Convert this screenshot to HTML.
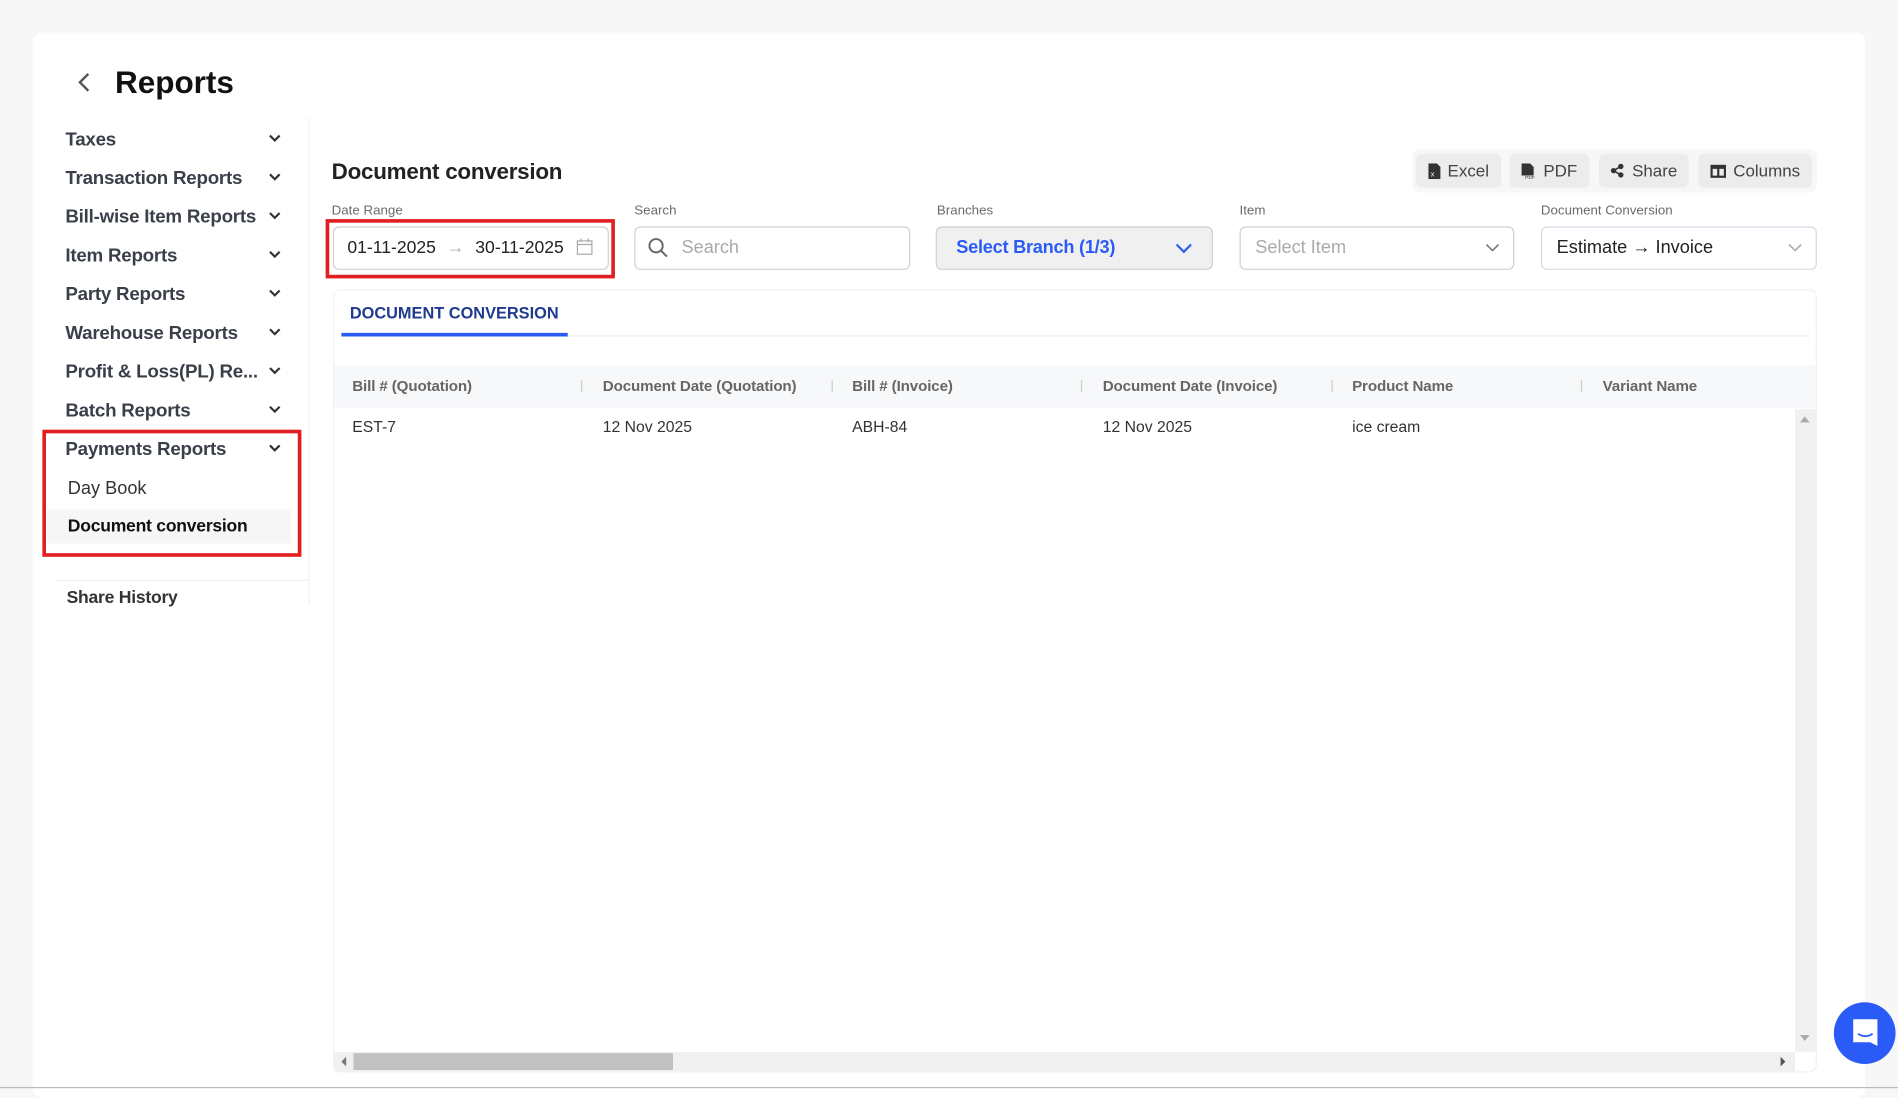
<!DOCTYPE html>
<html><head><meta charset="utf-8"><style>
*{box-sizing:border-box;margin:0;padding:0}
html,body{width:1898px;height:1088px;overflow:hidden;background:#f7f7f7;font-family:"Liberation Sans",sans-serif}
#s{position:absolute;left:0;top:0;width:1568px;height:899px;transform:scale(1.21046);transform-origin:0 0}
.a{position:absolute}
.card{left:27px;top:27px;width:1514px;height:880px;background:#fff;border-radius:8px}
.nav{left:54px;font-size:15.5px;font-weight:bold;color:#3a3f4a;line-height:20px;letter-spacing:-0.2px}
.lbl{font-size:11px;color:#6b6b6b;top:168px}
.inp{top:187px;height:36px;border:1px solid #d0d0d0;border-radius:5px;background:#fff;font-size:15px;line-height:34px;padding-left:12px}
.btn{top:127px;height:28px;background:#ececec;border-radius:5px;font-size:14px;color:#444;line-height:28px;display:flex;align-items:center;justify-content:center;gap:6px}
.th{top:312px;font-size:12.5px;color:#666;font-weight:bold;letter-spacing:-0.1px}
.sep{top:314px;width:1px;height:10px;background:#ccc}
.td{top:345px;font-size:13px;color:#333}
</style></head><body><div id="s">
<div class="a card"></div>
<svg class="a" style="left:62px;top:59px" width="14" height="18"><path d="M11 2 L4 9 L11 16" stroke="#555" stroke-width="2" fill="none"/></svg>
<div class="a" style="left:95px;top:53px;font-size:26px;font-weight:bold;color:#111">Reports</div>
<div class="a" style="left:255px;top:97px;width:1px;height:403px;background:#f0f0f0"></div>

<div class="a nav" style="top:106px">Taxes</div>
<div class="a nav" style="top:138px">Transaction Reports</div>
<div class="a nav" style="top:170px">Bill-wise Item Reports</div>
<div class="a nav" style="top:202px">Item Reports</div>
<div class="a nav" style="top:234px">Party Reports</div>
<div class="a nav" style="top:266px">Warehouse Reports</div>
<div class="a nav" style="top:298px">Profit &amp; Loss(PL) Re...</div>
<div class="a nav" style="top:330px">Batch Reports</div>
<div class="a nav" style="top:362px">Payments Reports</div>
<svg class="a" style="left:0;top:0" width="260" height="400">
<g stroke="#333" stroke-width="1.8" fill="none">
<path d="M223 112 l4 4 l4 -4"/><path d="M223 144 l4 4 l4 -4"/><path d="M223 176 l4 4 l4 -4"/><path d="M223 208 l4 4 l4 -4"/><path d="M223 240 l4 4 l4 -4"/><path d="M223 272 l4 4 l4 -4"/><path d="M223 304 l4 4 l4 -4"/><path d="M223 336 l4 4 l4 -4"/><path d="M223 368 l4 4 l4 -4"/>
</g></svg>
<div class="a" style="left:39px;top:421px;width:201px;height:28px;background:#f6f6f6"></div>
<div class="a" style="left:56px;top:395px;font-size:15px;color:#333">Day Book</div>
<div class="a" style="left:56px;top:427px;font-size:14.5px;font-weight:bold;color:#111;letter-spacing:-0.2px">Document conversion</div>
<div class="a" style="left:35px;top:355px;width:214px;height:105px;border:3px solid #e02020"></div>
<div class="a" style="left:45px;top:479px;width:210px;height:1px;background:#f0f0f0"></div>
<div class="a" style="left:55px;top:486px;font-size:14.5px;color:#333;font-weight:bold;letter-spacing:-0.2px">Share History</div>

<div class="a" style="left:274px;top:131px;font-size:18.5px;font-weight:bold;color:#222;letter-spacing:-0.2px">Document conversion</div>
<div class="a" style="left:1167px;top:123px;width:334px;height:36px;background:#f7f7f7;border-radius:6px"></div>
<div class="a btn" style="left:1170px;width:70px"><svg width="10" height="13"><path d="M0 0h7l3 3v10H0z" fill="#333"/><text x="2" y="11" font-size="6" fill="#fff" font-family="Liberation Sans">x</text></svg>Excel</div>
<div class="a btn" style="left:1247px;width:66px"><svg width="12" height="13"><path d="M0 0h7l3 3v7H0z" fill="#333"/><text x="3" y="13" font-size="4" fill="#333" font-family="Liberation Sans">PDF</text></svg>PDF</div>
<div class="a btn" style="left:1321px;width:74px"><svg width="12" height="12"><circle cx="9" cy="2.5" r="2.2" fill="#333"/><circle cx="9" cy="9.5" r="2.2" fill="#333"/><circle cx="3" cy="6" r="2.2" fill="#333"/><path d="M3 6L9 2.5M3 6L9 9.5" stroke="#333" stroke-width="1.3"/></svg>Share</div>
<div class="a btn" style="left:1403px;width:94px"><svg width="13" height="11"><rect x="1" y="1" width="11" height="9" fill="none" stroke="#333" stroke-width="1.8"/><path d="M6.5 1v9" stroke="#333" stroke-width="1.8"/><rect x="1" y="1" width="11" height="2.5" fill="#333"/></svg>Columns</div>

<div class="a lbl" style="left:274px">Date Range</div>
<div class="a lbl" style="left:524px">Search</div>
<div class="a lbl" style="left:774px">Branches</div>
<div class="a lbl" style="left:1024px">Item</div>
<div class="a lbl" style="left:1273px">Document Conversion</div>

<div class="a inp" style="left:275px;width:228px;color:#222;font-size:14.5px;padding-left:11px">01-11-2025 <span style="color:#aaa;margin:0 5px">→</span> 30-11-2025</div>
<svg class="a" style="left:476px;top:197px" width="14" height="14"><rect x="1" y="2" width="12" height="11" fill="#fff" stroke="#aaa"/><path d="M1 5h12M4 0v3M10 0v3" stroke="#aaa"/></svg>
<div class="a" style="left:269px;top:181px;width:239px;height:49px;border:3px solid #e02020"></div>
<div class="a inp" style="left:524px;width:228px;color:#aaa;padding-left:38px">Search</div>
<svg class="a" style="left:535px;top:196px" width="17" height="17"><circle cx="7" cy="7" r="5.5" stroke="#666" stroke-width="1.6" fill="none"/><path d="M11 11l5 5" stroke="#666" stroke-width="1.6"/></svg>
<div class="a inp" style="left:773px;width:229px;background:#f0f0f0;color:#2b5bf6;font-weight:bold;padding-left:16px;letter-spacing:-0.2px">Select Branch (1/3)</div>
<svg class="a" style="left:970px;top:199px" width="16" height="12"><path d="M2 3l6 6l6-6" stroke="#2b5bf6" stroke-width="1.8" fill="none"/></svg>
<div class="a inp" style="left:1024px;width:227px;color:#aaa">Select Item</div>
<svg class="a" style="left:1227px;top:200px" width="12" height="10"><path d="M1 2l5 5l5-5" stroke="#777" stroke-width="1.3" fill="none"/></svg>
<div class="a inp" style="left:1273px;width:228px;color:#222;border-color:#d6dbe6">Estimate → Invoice</div>
<svg class="a" style="left:1477px;top:200px" width="12" height="10"><path d="M1 2l5 5l5-5" stroke="#aaa" stroke-width="1.3" fill="none"/></svg>

<div class="a" style="left:275px;top:239px;width:1226px;height:647px;border:1px solid #f2f2f2;border-radius:6px"></div>
<div class="a" style="left:289px;top:251px;font-size:13.5px;font-weight:bold;color:#1f3a8f">DOCUMENT CONVERSION</div>
<div class="a" style="left:282px;top:277px;width:1213px;height:1px;background:#eee"></div>
<div class="a" style="left:282px;top:275px;width:187px;height:3px;background:#2b5bf6"></div>
<div class="a" style="left:276px;top:302px;width:1224px;height:35px;background:#f7f8fa"></div>
<div class="a th" style="left:291px">Bill # (Quotation)</div>
<div class="a th" style="left:498px">Document Date (Quotation)</div>
<div class="a th" style="left:704px">Bill # (Invoice)</div>
<div class="a th" style="left:911px">Document Date (Invoice)</div>
<div class="a th" style="left:1117px">Product Name</div>
<div class="a th" style="left:1324px">Variant Name</div>
<div class="a sep" style="left:480px"></div><div class="a sep" style="left:687px"></div><div class="a sep" style="left:893px"></div><div class="a sep" style="left:1100px"></div><div class="a sep" style="left:1306px"></div>
<div class="a td" style="left:291px">EST-7</div>
<div class="a td" style="left:498px">12 Nov 2025</div>
<div class="a td" style="left:704px">ABH-84</div>
<div class="a td" style="left:911px">12 Nov 2025</div>
<div class="a td" style="left:1117px">ice cream</div>

<div class="a" style="left:1483px;top:338px;width:17px;height:531px;background:#f1f1f1"></div>
<svg class="a" style="left:1486px;top:342px" width="10" height="8"><path d="M1 7l4-5l4 5z" fill="#aaa"/></svg>
<svg class="a" style="left:1486px;top:854px" width="10" height="8"><path d="M1 1l4 5l4-5z" fill="#aaa"/></svg>
<div class="a" style="left:276px;top:869px;width:1207px;height:16px;background:#f0f0f0"></div>
<div class="a" style="left:292px;top:870px;width:264px;height:14px;background:#c1c1c1"></div>
<svg class="a" style="left:280px;top:872px" width="8" height="10"><path d="M6 1L2 5l4 4z" fill="#777"/></svg>
<svg class="a" style="left:1469px;top:872px" width="8" height="10"><path d="M2 1l4 4l-4 4z" fill="#555"/></svg>

<div class="a" style="left:1515px;top:828px;width:51px;height:51px;border-radius:50%;background:#2b5bf6"></div>
<svg class="a" style="left:1529px;top:841px" width="24" height="25"><path d="M2 1h20v22l-6-3H2z" fill="#fff"/><path d="M6 13q6 4 12 0" stroke="#2b5bf6" stroke-width="1.5" fill="none"/></svg>
<div class="a" style="left:0;top:898px;width:1568px;height:1px;background:#bbb"></div>
</div></body></html>
